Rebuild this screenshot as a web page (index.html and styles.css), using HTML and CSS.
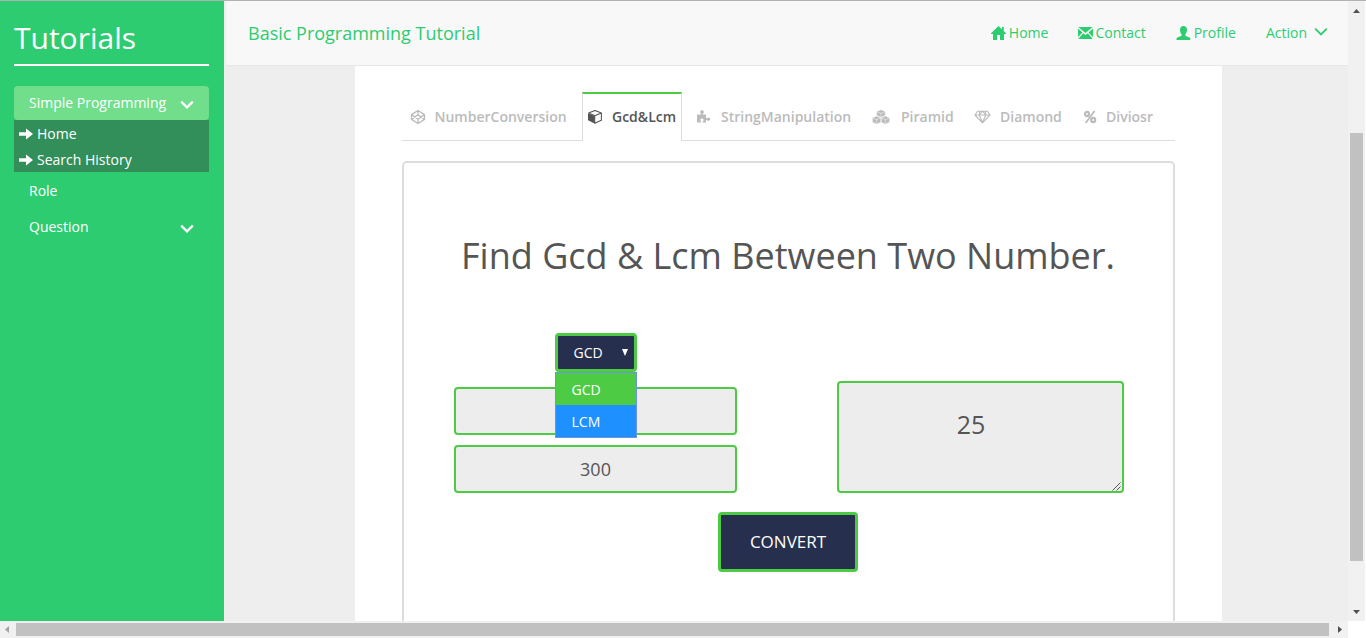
FILE: index.html
```
<!DOCTYPE html>
<html lang="en">
<head>
<meta charset="utf-8">
<title>Tutorials</title>
<link rel="stylesheet" href="styles.css">
</head>
<body>
<div class="window">
  <div class="view">
    <aside class="sidebar">
      <h1 class="brand">Tutorials</h1>
      <nav class="side-nav">
        <a class="side-link side-open"><span>Simple Programming</span><svg class="chev" width="14" height="10" viewBox="0 0 14 10"><path d="M1.200 1.600 7 7.400l5.800-5.800"/></svg></a>
        <div class="submenu">
          <a class="sub-link"><svg width="15" height="12" viewBox="0 0 15 12"><path d="M0 4.200h7V0.500L14 6 7 11.500V7.800H0z"/></svg><span>Home</span></a>
          <a class="sub-link"><svg width="15" height="12" viewBox="0 0 15 12"><path d="M0 4.200h7V0.500L14 6 7 11.500V7.800H0z"/></svg><span>Search History</span></a>
        </div>
        <a class="side-link side-role"><span>Role</span></a>
        <a class="side-link"><span>Question</span><svg class="chev" width="14" height="10" viewBox="0 0 14 10"><path d="M1.200 1.600 7 7.400l5.800-5.800"/></svg></a>
      </nav>
    </aside>
    <div class="page">
      <header class="topbar">
        <span class="site-name">Basic Programming Tutorial</span>
        <nav class="top-nav">
          <a class="top-link"><svg width="15" height="14" viewBox="0 0 15 14"><path d="M7.500 0 11 3.300V1h1.800v4L15 7.300V8h-2v6H9V9H6v5H2V8H0v-.7z"/></svg><span>Home</span></a>
          <a class="top-link tight"><svg width="15" height="12" viewBox="0 0 15 12"><path d="M.3 0h14.400L7.500 6zM0 1.500l4.500 4L0 10zM15 1.500l-4.500 4L15 10zM5.200 6.200l2.300 1.900 2.300-1.900 5 5.800H.2z"/></svg><span>Contact</span></a>
          <a class="top-link"><svg width="15" height="14" viewBox="0 0 15 14"><path d="M7.500 0C9.700 0 11 1.400 11 3.700c0 2-.8 3.800-1.700 4.700v1.300l4.200 1.900c.6.300.8.600.8 1.200V14H.5v-1.200c0-.6.200-.9.800-1.200l4.300-1.900V8.400C4.600 7.500 4 5.700 4 3.700 4 1.400 5.300 0 7.500 0z"/></svg><span>Profile</span></a>
          <a class="top-link"><span>Action</span><svg class="chev" width="14" height="10" viewBox="0 0 14 10"><path d="M1.200 1.600 7 7.400l5.800-5.800"/></svg></a>
        </nav>
      </header>
      <main class="content">
        <div class="tabs">
          <a class="tab first"><svg width="16" height="16" viewBox="0 0 16 16"><g fill="none" stroke="currentColor" stroke-width="1.300" stroke-linejoin="round"><path d="M8 1.500 14.500 5.600v4.800L8 14.500 1.500 10.400V5.600zM8 1.500v4.300M8 10.200v4.300M1.500 5.600l6.500 4.600 6.500-4.600M1.500 10.400 8 5.800l6.500 4.600"/></g></svg><span>NumberConversion</span></a>
          <a class="tab active"><svg width="16" height="16" viewBox="0 0 16 16"><path d="M1 4.200 7.500 7v7.500L1 11.200z"/><path d="M1.500 4 8 1.500 14.400 4v7.200l-6.700 3V6.800L14.400 4M8 6.700 1.500 4" fill="none" stroke="currentColor" stroke-width="1.100" stroke-linejoin="round"/></svg><span>Gcd&amp;Lcm</span></a>
          <a class="tab"><svg width="16" height="16" viewBox="0 0 16 16"><path d="M1 5.500h4.300C4.900 4.500 4.200 4 4.200 3c0-1.200.8-1.800 1.800-1.800S7.800 1.800 7.800 3c0 1-.8 1.500-1.100 2.500H10v3.700c1 0 1.500-.8 2.500-.8s1.700.8 1.700 1.700-.7 1.700-1.700 1.700S11 11 10 11v2.500H6.700c0-1.500.8-1.500.8-2.600S6.900 9.400 6 9.400s-1.600.5-1.600 1.500.8 1.200.8 2.600H1z"/></svg><span>StringManipulation</span></a>
          <a class="tab wide"><svg width="18" height="16" viewBox="0 0 18 16"><g stroke="#fff" stroke-width=".5" stroke-linejoin="round"><path d="M9 .7l4.300 1.800v4L9 8.500 4.700 6.500v-4zM4.700 7l4.200 1.800v4.400l-4.200 2-4.300-2V8.800zM13.300 7l4.300 1.800v4.400l-4.300 2-4.200-2V8.800z"/><path d="M5.500 3 9 4.400 12.500 3M9 4.400V8M1.200 9.200l3.500 1.500L8.200 9.200M4.700 10.700v4M9.800 9.200l3.500 1.500 3.500-1.500M13.300 10.700v4" fill="none"/></g></svg><span>Piramid</span></a>
          <a class="tab"><svg width="17" height="16" viewBox="0 0 17 16"><path d="M3.500 2.200h10L16 6l-7.500 7.800L1 6zM1 6h15M5.800 2.200 5.200 6l3.300 7.800L11.800 6l-.6-3.800M5.200 6l3.300-3.800L11.800 6" fill="none" stroke="currentColor" stroke-width="1.100" stroke-linejoin="round"/></svg><span>Diamond</span></a>
          <a class="tab"><svg width="14" height="16" viewBox="0 0 14 16"><g fill="none" stroke="currentColor" stroke-width="2.200"><ellipse cx="4" cy="5" rx="2" ry="2.200"/><ellipse cx="10.200" cy="11" rx="2" ry="2.200"/><path d="M11.500 2 2.700 14" stroke-width="1.800"/></g></svg><span>Diviosr</span></a>
          <span class="tab-rest"></span>
        </div>
        <section class="panel">
          <h2 class="panel-title">Find Gcd &amp; Lcm Between Two Number.</h2>
          <div class="form-row">
            <div class="inputs">
              <div class="select">
                <div class="select-box"><span>GCD</span><svg width="6" height="7" viewBox="0 0 6 7"><path d="M0 0h6L3 7z"/></svg></div>
                <div class="options"><div class="option chosen">GCD</div><div class="option hover">LCM</div></div>
              </div>
              <div class="field"></div>
              <div class="field">300</div>
            </div>
            <div class="result"><span>25</span><svg class="grip" width="9" height="9" viewBox="0 0 9 9"><path d="M.5 8.500l8-8M4.500 8.500l4-4"/></svg></div>
          </div>
          <div class="convert">CONVERT</div>
        </section>
      </main>
    </div>
  </div>
  <div class="vbar">
    <svg width="7" height="4" viewBox="0 0 7 4"><path d="M0 4 3.500 0 7 4z"/></svg>
    <div class="vthumb"></div>
    <svg width="7" height="4" viewBox="0 0 7 4"><path d="M0 0h7L3.500 4z"/></svg>
  </div>
  <div class="hbar">
    <svg class="dim" width="4" height="7" viewBox="0 0 4 7"><path d="M4 0v7L0 3.500z"/></svg>
    <div class="hthumb"></div>
    <svg width="4" height="7" viewBox="0 0 4 7"><path d="M0 0v7l4-3.500z"/></svg>
  </div>
</div>
</body>
</html>
```
FILE: styles.css
```
* { box-sizing: border-box; }
body { margin: 0; background: #fff; font: 14px/20px "Open Sans", sans-serif; overflow: hidden; }
h1, h2 { margin: 0; font-weight: 400; }
svg { display: block; flex: none; fill: currentColor; }
.chev { fill: none; stroke: currentColor; stroke-width: 2.2; }

.window { width: 1366px; height: 638px; border-top: 1px solid #b2b2b2; display: grid; grid-template-columns: 1348px 17px; grid-template-rows: 620px 17px; }
.view { display: flex; overflow: hidden; background: #eee; }

.sidebar { width: 224px; padding: 0 15px 0 14px; background: #2ecc71; color: #fff; }
.brand { height: 65px; padding-top: 17px; border-bottom: 2px solid #fff; font-size: 30px; line-height: 40px; }
.side-nav { padding-top: 20px; }
.side-link { display: flex; align-items: center; justify-content: space-between; height: 34px; padding: 0 15px; border-radius: 4px; }
.side-link .chev { margin-top: 4px; }
.side-open { background: #70de8b; border-radius: 4px; }
.side-role { margin: 2px 0; }
.submenu { background: #328f5a; }
.sub-link { display: flex; align-items: center; gap: 3px; height: 26px; padding: 2px 0 0 5px; }

.page { flex: 1; display: flex; flex-direction: column; align-items: center; padding-left: 2px; }
.topbar { align-self: stretch; flex: none; display: flex; justify-content: space-between; height: 65px; padding: 0 20px 0 22px; background: #f8f8f8; border-bottom: 1px solid #e7e7e7; color: #2ecc71; }
.site-name { font-size: 18px; line-height: 65px; }
.top-nav { display: flex; gap: 30px; height: 64px; }
.top-link { display: flex; align-items: center; gap: 3px; }
.top-link.tight { gap: 2px; }
.top-link .chev { margin: -2px 0 0 4px; stroke-width: 1.9; }

.content { width: 867px; height: 555px; padding: 26px 47px 0; background: #fff; margin-left: 3px; }
.tabs { display: grid; grid-template-columns: 180px 100px 181px 103px 109px 86px 14px; height: 49px; color: #bbb; font-weight: 600; }
.tab { display: flex; align-items: center; gap: 9px; padding: 2px 0 0 8px; border-bottom: 1px solid #ddd; white-space: nowrap; }
.tab.first { padding-left: 7.5px; }
.tab:nth-child(3) { padding-left: 14px; }
.tab.wide { gap: 11px; padding-left: 9px; }
.tab.active { color: #555; padding: 0 0 1px 4px; border: 1px solid #ddd; border-top: 2px solid #4dcb45; border-bottom: 0; }
.tab-rest { border-bottom: 1px solid #ddd; }

.panel { height: 480px; margin-top: 20px; padding: 0 50px; border: 2px solid #ddd; border-radius: 5px; color: #555; text-align: center; }
.panel-title { height: 170px; padding: 68px 1px 0 0; font-size: 36px; line-height: 50px; white-space: nowrap; }
.form-row { display: flex; justify-content: space-between; align-items: flex-end; height: 160px; margin-right: -1px; }
.inputs { width: 283px; height: 160px; display: flex; flex-direction: column; align-items: center; }
.select { position: relative; width: 82px; height: 39px; margin-bottom: 15px; color: #fff; }
.select-box { display: flex; align-items: center; justify-content: space-between; height: 39px; padding: 0 6px 0 16px; border: 3px solid #4dcb45; border-radius: 4px; background: #272f4e; }
.options { position: absolute; left: 0; top: 39px; width: 82px; height: 66px; border: 1px solid #6f93d8; text-align: left; }
.option { height: 32px; padding-left: 16px; line-height: 34px; }
.chosen { background: #4dcb45; }
.hover { background: #1e90ff; }
.field { width: 283px; height: 48px; flex: none; border: 2px solid #4dcb45; border-radius: 4px; background: #ededed; font-size: 18px; line-height: 45px; }
.field + .field { margin-top: 10px; }
.result { position: relative; width: 287px; height: 112px; padding: 21px 19px 0 0; border: 2px solid #4dcb45; border-radius: 4px; background: #ededed; font-size: 25px; line-height: 40px; }
.grip { position: absolute; right: 1px; bottom: 0; fill: none; stroke: #555; stroke-width: 1; }
.convert { width: 140px; height: 60px; margin: 19px 0 0 264px; border: 3px solid #4dcb45; border-radius: 4px; background: #272f4e; color: #fff; font-size: 17px; line-height: 54px; }

.vbar { display: flex; flex-direction: column; align-items: center; justify-content: space-between; padding: 8px 0 7px; background: #f1f1f1; color: #505050; }
.vthumb { width: 13px; height: 428px; margin: 70px 0 0; background: #c1c1c1; }
.hbar { display: flex; align-items: center; justify-content: space-between; padding: 0 6px 0 5px; background: #f1f1f1; color: #505050; }
.hthumb { width: 1313px; height: 13px; margin-right: 2px; background: #c1c1c1; }
.dim { color: #a3a3a3; }
```
